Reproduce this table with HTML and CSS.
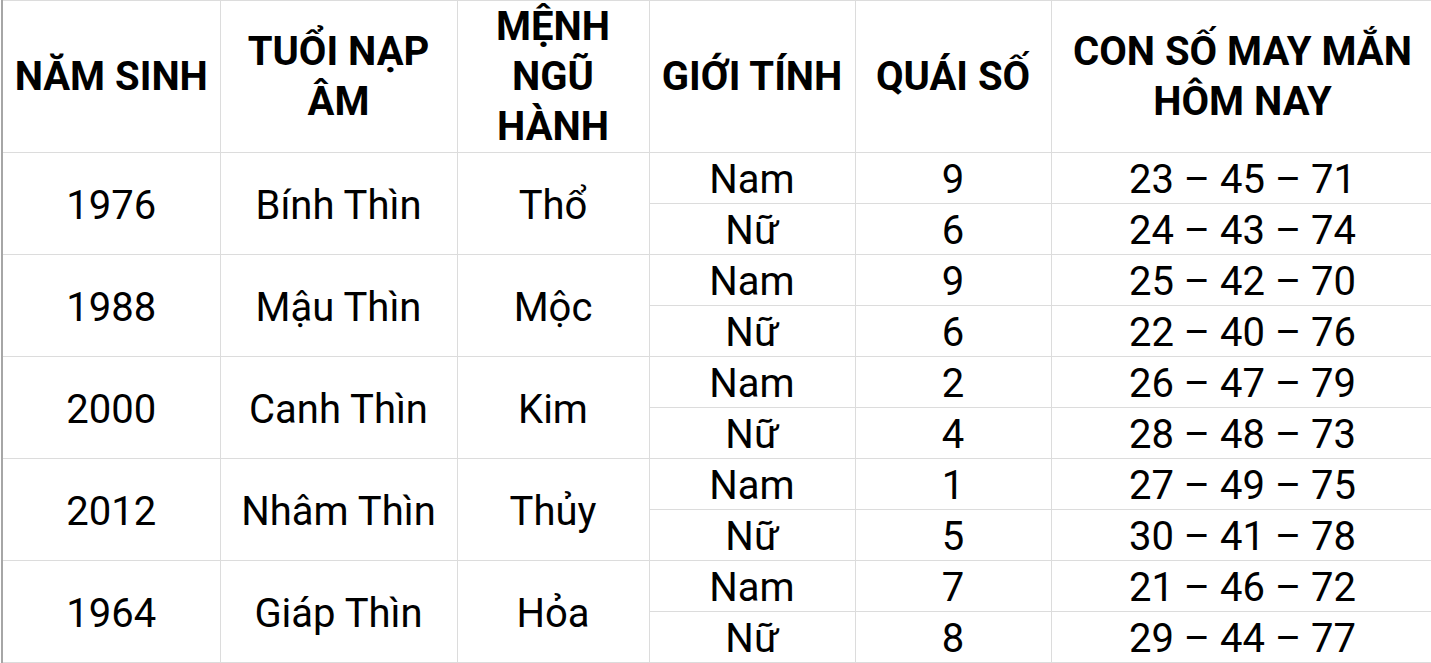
FILE: index.html
```html
<!DOCTYPE html>
<html lang="vi">
<head>
<meta charset="utf-8">
<title>Con số may mắn tuổi Thìn</title>
<link rel="stylesheet" href="styles.css">
</head>
<body>
<div class="wrap">
<table class="lucky">
  <colgroup>
    <col class="c1"><col class="c2"><col class="c3"><col class="c4"><col class="c5"><col class="c6">
  </colgroup>
  <thead>
    <tr>
      <th>NĂM SINH</th>
      <th>TUỔI NẠP ÂM</th>
      <th>MỆNH NGŨ HÀNH</th>
      <th>GIỚI TÍNH</th>
      <th>QUÁI SỐ</th>
      <th>CON SỐ MAY MẮN HÔM NAY</th>
    </tr>
  </thead>
  <tbody>
    <tr><td rowspan="2">1976</td><td rowspan="2">Bính Thìn</td><td rowspan="2">Thổ</td><td>Nam</td><td>9</td><td>23 – 45 – 71</td></tr>
    <tr><td>Nữ</td><td>6</td><td>24 – 43 – 74</td></tr>
    <tr><td rowspan="2">1988</td><td rowspan="2">Mậu Thìn</td><td rowspan="2">Mộc</td><td>Nam</td><td>9</td><td>25 – 42 – 70</td></tr>
    <tr><td>Nữ</td><td>6</td><td>22 – 40 – 76</td></tr>
    <tr><td rowspan="2">2000</td><td rowspan="2">Canh Thìn</td><td rowspan="2">Kim</td><td>Nam</td><td>2</td><td>26 – 47 – 79</td></tr>
    <tr><td>Nữ</td><td>4</td><td>28 – 48 – 73</td></tr>
    <tr><td rowspan="2">2012</td><td rowspan="2">Nhâm Thìn</td><td rowspan="2">Thủy</td><td>Nam</td><td>1</td><td>27 – 49 – 75</td></tr>
    <tr><td>Nữ</td><td>5</td><td>30 – 41 – 78</td></tr>
    <tr><td rowspan="2">1964</td><td rowspan="2">Giáp Thìn</td><td rowspan="2">Hỏa</td><td>Nam</td><td>7</td><td>21 – 46 – 72</td></tr>
    <tr><td>Nữ</td><td>8</td><td>29 – 44 – 77</td></tr>
  </tbody>
</table>
</div>
</body>
</html>
```
FILE: styles.css
```css
html, body {
  margin: 0;
  padding: 0;
  background: #ffffff;
  overflow: hidden;
}
.wrap {
  padding-left: 1px;
}
.lucky {
  border-collapse: collapse;
  table-layout: fixed;
  width: 1432px;
  font-family: Roboto, "Noto Sans", sans-serif;
  color: #000;
  border-left: 2px solid #a6a6a6;
}
.c1 { width: 218px; }
.c2 { width: 237px; }
.c3 { width: 192px; }
.c4 { width: 206px; }
.c5 { width: 196px; }
.c6 { width: 383px; }
.lucky th,
.lucky td {
  border: 1px solid #dcdcdc;
  text-align: center;
  vertical-align: middle;
  padding: 0 8px;
}
.lucky th {
  height: 151px;
  box-sizing: border-box;
  padding-top: 1px;
  font-weight: 700;
  font-size: 40px;
  line-height: 50px;
}
.lucky td {
  height: 51px;
  box-sizing: border-box;
  padding-top: 3px;
  font-size: 40px;
  line-height: 47px;
  font-weight: 400;
}
```
